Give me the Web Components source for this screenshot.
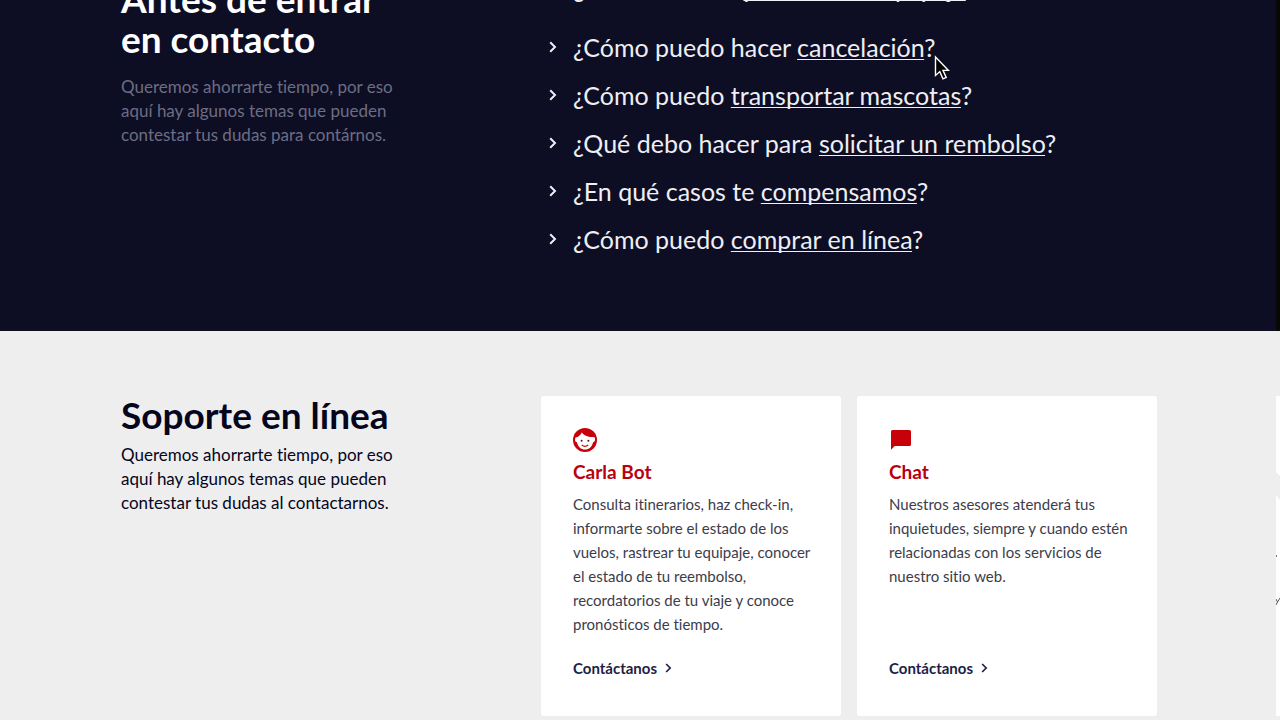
<!DOCTYPE html>
<html lang="es">
<head>
<meta charset="utf-8">
<title>Contacto</title>
<style>
body { margin: 0; height: 100vh; overflow: hidden; background: #eeeeee; font-family: Lato, "Noto Sans", sans-serif; font-variant-ligatures: none; }
</style>
</head>
<body>
<contact-page></contact-page>

<script>
const define = (name, html) => customElements.define(name, class extends HTMLElement {
  constructor() {
    super();
    const t = document.createElement('template');
    t.innerHTML = html;
    this.attachShadow({ mode: 'open' }).append(t.content.cloneNode(true));
    const link = this.shadowRoot.querySelector('a[data-link]');
    if (link) link.href = this.getAttribute('href') || '#';
  }
});

define('icon-chevron', `
<style>
:host { display: block; flex: none; width: 8px; height: 12px; }
svg { display: block; width: 100%; height: 100%; }
</style>
<svg viewBox="0 0 8 12" fill="none" stroke="currentColor" stroke-width="2" aria-hidden="true"><path d="M1.2 1.2 6 6 1.2 10.8"/></svg>`);

define('icon-face', `
<style>:host, svg { display: block; width: 24px; height: 24px; }</style>
<svg viewBox="0 0 24 24" aria-hidden="true">
<circle cx="12" cy="12" r="12" fill="#c8000a"/>
<path fill="#fff" d="M8.800 4.500c2 3 6 4.700 12.800 4.700.7 1.300.6 2.600.1 3.800-.3.700-.9 1.100-1.600 1.200-1 4.400-4 7.400-8.100 7.400s-7.100-3-8.100-7.400c-1-.1-1.600-.7-1.800-1.700-.2-1 0-2 .4-2.900 2.900-.6 5.200-2.400 6.300-5.100z"/>
<circle cx="8.600" cy="12.800" r="1" fill="#541226"/><circle cx="15.400" cy="12.800" r="1" fill="#541226"/>
<path d="M8.700 17c2 1.600 4.600 1.600 6.600 0" fill="none" stroke="#c8000a" stroke-width="1.200"/>
</svg>`);

define('icon-chat', `
<style>:host, svg { display: block; width: 24px; height: 24px; }</style>
<svg viewBox="0 0 24 24" aria-hidden="true"><path fill="#c8000a" d="M3.500 2h17A1.500 1.500 0 0 1 22 3.500v13a1.500 1.500 0 0 1-1.500 1.500H5.700L2 21.700V3.500A1.500 1.500 0 0 1 3.500 2z"/></svg>`);

define('section-intro', `
<style>
:host { display: block; }
h2 { margin: 0; font-size: 37px; line-height: 40px; font-weight: 700; }
p { margin: var(--intro-gap, 8px) 0 0; font-size: 17px; line-height: 24px; color: var(--intro-color, inherit); white-space: nowrap; }
</style>
<h2><slot name="title"></slot></h2>
<p><slot></slot></p>`);

define('faq-item', `
<style>
:host { display: flex; align-items: center; gap: 16px; height: 48px; font-size: 25px; line-height: 32px; white-space: nowrap; color: #eeeef4; }
a { color: inherit; text-decoration: underline; text-decoration-thickness: 1px; text-underline-offset: 2px; text-decoration-skip-ink: none; }
</style>
<icon-chevron></icon-chevron>
<span><slot name="lead"></slot> <a data-link><slot></slot></a>?</span>`);

define('support-card', `
<style>
:host { display: flex; flex-direction: column; box-sizing: border-box; flex: 0 1 300px; min-width: 0; min-height: 320px; padding: 32px; background: #fff; border-radius: 3px; }
h3 { margin: 8px 0 0; font-size: 19px; line-height: 24px; font-weight: 700; color: #b9000f; }
p { margin: 8px 0 0; font-size: 15px; line-height: 24px; color: #3c3c4b; white-space: nowrap; }
a { display: flex; align-items: center; gap: 8px; margin-top: auto; font-size: 15px; line-height: 24px; font-weight: 700; color: #1e1e46; text-decoration: none; padding-bottom: 4px; }
icon-chevron { width: 7px; height: 10px; }
</style>
<slot name="icon"></slot>
<h3><slot name="title"></slot></h3>
<p><slot></slot></p>
<a data-link>Contáctanos <icon-chevron></icon-chevron></a>`);

define('contact-page', `
<style>
:host { display: block; }
section { display: grid; grid-template-columns: 420px 1fr 4px; padding-left: 121px; }
.faq { background: #0d0e24; color: #fff; padding-bottom: 68px; --intro-gap: 16px; --intro-color: #6c6d82; }
.faq ul { list-style: none; margin: -36px 0 0; padding: 0 0 0 8px; }
.faq li:first-child { margin-bottom: 11px; }
.faq section-intro { margin-top: -21px; }
.support { color: #05051e; padding-top: 65px; --intro-gap: 8px; }
.support section-intro { margin-top: -1px; }
.cards { display: flex; gap: 16px; }
.edge { background: #080808; margin: 0 0 -68px; }
.peek { background: #fff; }
.peek svg { display: block; width: 4px; height: 320px; }
.pointer { position: absolute; left: 934px; top: 55px; width: 16px; height: 26px; }
</style>
<section class="faq">
<section-intro><span slot="title">Antes de entrar<br>en contacto</span>Queremos ahorrarte tiempo, por eso<br>aquí hay algunos temas que pueden<br>contestar tus dudas para contárnos.</section-intro>
<ul>
<li><faq-item><span slot="lead">¿Cuáles son las</span>políticas de equipaje</faq-item></li>
<li><faq-item><span slot="lead">¿Cómo puedo hacer</span>cancelación</faq-item></li>
<li><faq-item><span slot="lead">¿Cómo puedo</span>transportar mascotas</faq-item></li>
<li><faq-item><span slot="lead">¿Qué debo hacer para</span>solicitar un rembolso</faq-item></li>
<li><faq-item><span slot="lead">¿En qué casos te</span>compensamos</faq-item></li>
<li><faq-item><span slot="lead">¿Cómo puedo</span>comprar en línea</faq-item></li>
</ul>
<div class="edge"></div>
</section>
<section class="support">
<section-intro><span slot="title">Soporte en línea</span>Queremos ahorrarte tiempo, por eso<br>aquí hay algunos temas que pueden<br>contestar tus dudas al contactarnos.</section-intro>
<div class="cards">
<support-card><icon-face slot="icon"></icon-face><span slot="title">Carla Bot</span>Consulta itinerarios, haz check-in,<br>informarte sobre el estado de los<br>vuelos, rastrear tu equipaje, conocer<br>el estado de tu reembolso,<br>recordatorios de tu viaje y conoce<br>pronósticos de tiempo.</support-card>
<support-card><icon-chat slot="icon"></icon-chat><span slot="title">Chat</span>Nuestros asesores atenderá tus<br>inquietudes, siempre y cuando estén<br>relacionadas con los servicios de<br>nuestro sitio web.</support-card>
</div>
<div class="peek"><svg viewBox="0 0 4 320" aria-hidden="true"><path d="M0 76l4 4v24l-4-5z" fill="#eee"/><path d="M0 159h1v2H0z" fill="#777"/><path d="M0 203l1.500 3L4 202M1.500 206 0 209" fill="none" stroke="#555"/></svg></div>
</section>
<svg class="pointer" viewBox="0 0 16 26" aria-hidden="true"><path d="M1.500 2v18.500l4.300-3.900 3.200 7.200 3.200-1.400-3.200-7h5.500z" fill="#000" stroke="#fff" stroke-width="1.400"/></svg>`);
</script>
</body>
</html>
